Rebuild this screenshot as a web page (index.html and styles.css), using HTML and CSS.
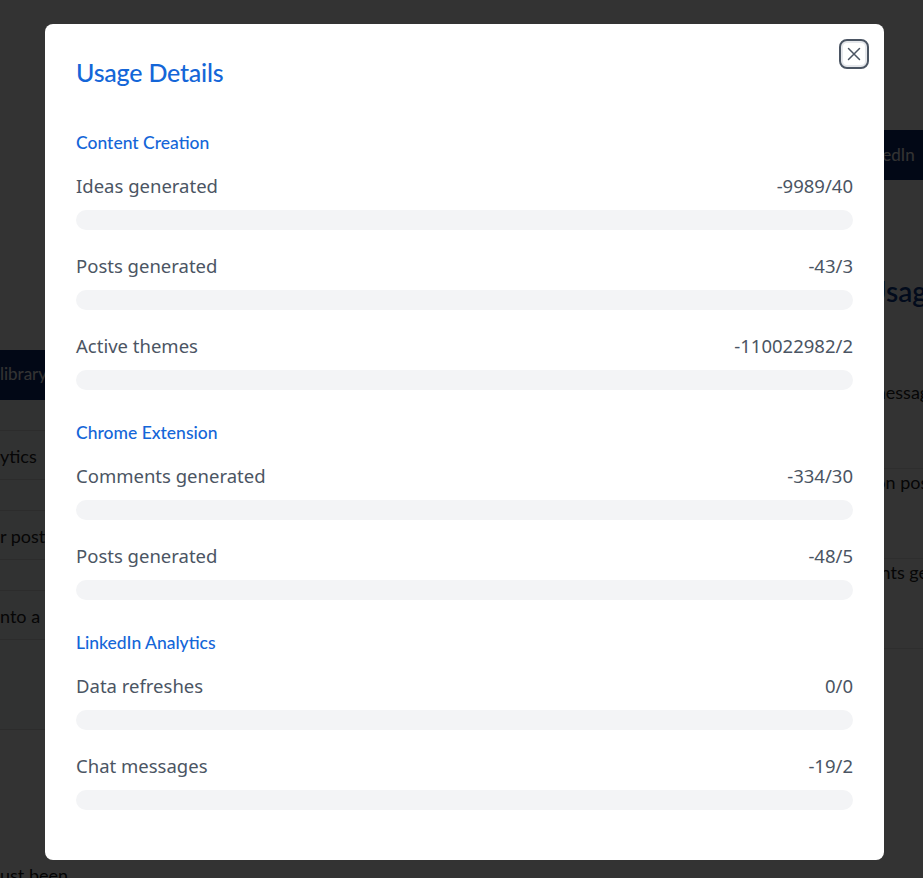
FILE: index.html
```html
<!DOCTYPE html>
<html>
    <head>
        <title>Usage Details</title>
        <link rel="stylesheet" href="styles.css">
    </head>
    <body>
        <div class="page">
            <nav class="topnav">
                <a class="active">Dashboard</a>
                <a>Theme library</a>
                <a>Post analytics</a>
                <a>Publish</a>
            </nav>
            <div class="main">
                <aside class="side">
                    <div class="side-btn">library</div>
                    <ul class="side-list">
                        <li>ytics</li>
                        <li>r post</li>
                        <li>nto a p</li>
                    </ul>
                </aside>
                <section class="panel">
                    <div class="panel-btn">kedIn</div>
                    <h2>Usage</h2>
                    <ul class="panel-list">
                        <li>messages</li>
                        <li>ion posts</li>
                        <li>ents generated</li>
                    </ul>
                </section>
            </div>
            <p class="foot">ust been</p>
        </div>

        <div class="overlay">
            <div class="modal">
                <button class="close" aria-label="Close">
                    <svg width="14" height="14" viewBox="0 0 14 14"><path d="M1.5 1.5 12.5 12.5M12.5 1.5 1.5 12.5" stroke="#4b5563" stroke-width="1.5" stroke-linecap="round"/></svg>
                </button>
                <h1>Usage Details</h1>

                <div class="group">
                    <h3>Content Creation</h3>
                    <div class="row">
                        <div class="row-top"><span>Ideas generated</span><span>-9989/40</span></div>
                        <div class="bar"></div>
                    </div>
                    <div class="row">
                        <div class="row-top"><span>Posts generated</span><span>-43/3</span></div>
                        <div class="bar"></div>
                    </div>
                    <div class="row">
                        <div class="row-top"><span>Active themes</span><span>-110022982/2</span></div>
                        <div class="bar"></div>
                    </div>
                </div>

                <div class="group">
                    <h3>Chrome Extension</h3>
                    <div class="row">
                        <div class="row-top"><span>Comments generated</span><span>-334/30</span></div>
                        <div class="bar"></div>
                    </div>
                    <div class="row">
                        <div class="row-top"><span>Posts generated</span><span>-48/5</span></div>
                        <div class="bar"></div>
                    </div>
                </div>

                <div class="group">
                    <h3>LinkedIn Analytics</h3>
                    <div class="row">
                        <div class="row-top"><span>Data refreshes</span><span>0/0</span></div>
                        <div class="bar"></div>
                    </div>
                    <div class="row">
                        <div class="row-top"><span>Chat messages</span><span>-19/2</span></div>
                        <div class="bar"></div>
                    </div>
                </div>
            </div>
        </div>
    </body>
</html>
```

FILE: styles.css
```css
*{
margin: 0;
padding: 0;
box-sizing: border-box;
}
body{
background: #fff;
font-family: Lato, "Noto Sans", sans-serif;
overflow: hidden;
}

/* page behind the dialog */
.page{
height: 878px;
position: relative;
}
.topnav{
display: flex;
gap: 50px;
padding: 20px 0 0 193px;
height: 74px;
font-size: 20px;
color: #111;
}
.topnav .active{
color: #0a3a8a;
}
.main{
display: flex;
justify-content: space-between;
}
.side{
width: 45px;
margin-top: 276px;
height: 380px;
background: #f6f7fa;
border-bottom: 1px solid #ddd;
}
.side-btn{
height: 50px;
line-height: 48px;
background: #0a2a6e;
color: #fff;
font-size: 17px;
white-space: nowrap;
overflow: hidden;
}
.side-list{
list-style: none;
margin-top: 30px;
}
.side-list li{
height: 50px;
line-height: 50px;
border-top: 1px solid #ddd;
border-bottom: 1px solid #ddd;
margin-bottom: 30px;
font-size: 18px;
color: #222;
white-space: nowrap;
overflow: hidden;
}
.panel{
width: 57px;
margin-top: 56px;
}
.panel-btn{
height: 50px;
line-height: 50px;
background: #0a2a6e;
color: #fff;
font-size: 17px;
padding-left: 8px;
white-space: nowrap;
overflow: hidden;
}
.panel h2{
margin-top: 93px;
font-size: 28px;
line-height: 36px;
font-weight: 600;
color: #0a3a8a;
white-space: nowrap;
overflow: hidden;
}
.panel-list{
list-style: none;
margin-top: 70px;
padding-left: 5px;
}
.panel-list li{
height: 90px;
padding-top: 2px;
font-size: 18px;
color: #222;
border-bottom: 1px solid #e6e6e6;
white-space: nowrap;
overflow: hidden;
}
.foot{
position: absolute;
left: 0;
top: 864px;
font-size: 18px;
color: #111;
}

/* dialog */
.overlay{
position: fixed;
inset: 0;
background: rgba(0, 0, 0, 0.8);
display: flex;
align-items: flex-start;
padding: 24px 0 0 45px;
}
.modal{
position: relative;
width: 839px;
background: #fff;
border-radius: 8px;
padding: 32px 31px 50px;
}
.close{
position: absolute;
top: 15px;
right: 15px;
width: 30px;
height: 30px;
border: 2px solid #4b5563;
border-radius: 8px;
background: #fff;
box-shadow: inset 0 0 0 2px #e5e7eb;
display: flex;
align-items: center;
justify-content: center;
cursor: pointer;
}
.modal h1{
font-size: 25px;
line-height: 32px;
font-weight: 500;
color: #1466d8;
margin-bottom: 43px;
letter-spacing: -0.2px;
}
.group{
display: flex;
flex-direction: column;
gap: 22px;
margin-bottom: 31px;
}
.group:last-child{
margin-bottom: 0;
}
.group h3{
font-size: 17.5px;
line-height: 24px;
font-weight: 500;
color: #1466d8;
margin-bottom: -5px;
}
.row-top{
display: flex;
justify-content: space-between;
font-family: "Noto Sans", sans-serif;
font-size: 18.5px;
line-height: 28px;
color: #4b5563;
margin-bottom: 10px;
}
.bar{
height: 20px;
border-radius: 10px;
background: #f3f4f6;
}
```
